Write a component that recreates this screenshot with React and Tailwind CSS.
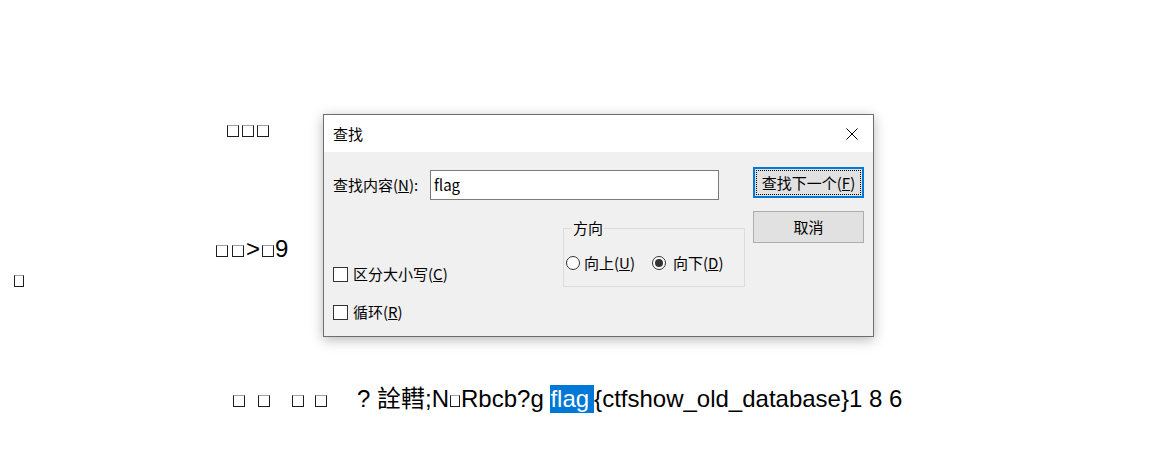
import React from "react";

const docFont = { fontFamily: '"Liberation Sans", "Noto Sans CJK SC", sans-serif' };
const uiFont = { fontFamily: '"Noto Sans CJK SC", "Noto Sans", sans-serif' };

function Radio({ checked }) {
  return (
    <span className="inline-flex shrink-0 w-[14px] h-[14px] rounded-full border border-[#333] bg-white items-center justify-center">
      {checked && <span className="w-[8px] h-[8px] rounded-full bg-[#333]" />}
    </span>
  );
}

function Check() {
  return <span className="inline-block shrink-0 w-[15px] h-[15px] border border-[#333] bg-white" />;
}

export default function App() {
  return (
    <div className="relative w-[1150px] h-[451px] bg-white overflow-hidden text-black">
      <div style={docFont} className="text-[24px] leading-[28px] whitespace-pre">
        <div className="mt-[115px] h-[28px] pl-[227px]">
          <span className="inline-block w-[12px] h-[12px] border border-[#1e1e1e] border-t-[#a0a0a0]" />
          <span className="inline-block w-[12px] h-[12px] ml-[3px] border border-[#1e1e1e] border-t-[#a0a0a0]" />
          <span className="inline-block w-[12px] h-[12px] ml-[3px] border border-[#1e1e1e] border-t-[#a0a0a0]" />
        </div>
        <div className="mt-[92px] h-[28px] pl-[216px]">
          <span className="inline-block w-[12px] h-[12px] border border-[#1e1e1e] border-t-[#a0a0a0]" />
          <span className="inline-block w-[12px] h-[12px] ml-[4px] border border-[#1e1e1e] border-t-[#a0a0a0]" />
          <span className="ml-[2px]">&gt;</span>
          <span className="inline-block w-[12px] h-[12px] ml-[2px] border border-[#1e1e1e] border-t-[#a0a0a0]" />
          <span className="ml-[1px]">9</span>
        </div>
        <div className="mt-[2px] h-[28px] pl-[14px]">
          <span className="inline-block w-[10px] h-[12px] border border-[#1e1e1e] border-t-[#a0a0a0]" />
        </div>
        <div className="mt-[92px] h-[28px] pl-[233px]">
          <span className="inline-block w-[12px] h-[12px] border border-[#1e1e1e] border-t-[#a0a0a0]" />
          <span className="inline-block w-[12px] h-[12px] ml-[13px] border border-[#1e1e1e] border-t-[#a0a0a0]" />
          <span className="inline-block w-[12px] h-[12px] ml-[22px] border border-[#1e1e1e] border-t-[#a0a0a0]" />
          <span className="inline-block w-[12px] h-[12px] ml-[11px] border border-[#1e1e1e] border-t-[#a0a0a0]" />
          <span className="ml-[30px]">? 詮轊;N</span>
          <span className="inline-block w-[10px] h-[12px] ml-[1px] mr-[1px] border border-[#1e1e1e] border-t-[#a0a0a0]" />
          <span>Rbcb?g </span>
          <span className="inline-block h-[28px] pr-[5px] bg-[#0078d7] text-white">flag</span>
          <span>{"{ctfshow_old_database}1 8 6"}</span>
        </div>
      </div>

      <div
        style={uiFont}
        className="absolute left-[323px] top-[114px] w-[551px] h-[223px] border border-[#6e6e6e] bg-[#f0f0f0] shadow-[0_3px_12px_rgba(0,0,0,0.28)] flex flex-col text-[15px] leading-[20px]"
      >
        <div className="h-[37px] bg-white flex items-center justify-between pl-[9px] pr-[15px]">
          <span>查找</span>
          <svg width="12" height="12" viewBox="0 0 12 12">
            <path d="M0.5 0.5L11.5 11.5M11.5 0.5L0.5 11.5" stroke="#000" strokeWidth="1" fill="none" />
          </svg>
        </div>
        <div className="flex-1 flex pl-[9px] pr-[9px] pt-[15px]">
          <div className="w-[412px] flex flex-col">
            <div className="flex items-center mt-[3px] h-[30px]">
              <span className="w-[97px]">
                查找内容(<span className="underline">N</span>):
              </span>
              <div className="w-[289px] h-[30px] border border-[#7a7a7a] bg-white pl-[3px] flex items-center">
                flag
              </div>
            </div>
            <div className="flex mt-[18px]">
              <div className="w-[230px] flex flex-col">
                <div className="mt-[46px] h-[20px] flex items-center gap-[5px]">
                  <Check />
                  <span>
                    区分大小写(<span className="underline">C</span>)
                  </span>
                </div>
                <div className="mt-[18px] h-[20px] flex items-center gap-[5px]">
                  <Check />
                  <span>
                    循环(<span className="underline">R</span>)
                  </span>
                </div>
              </div>
              <fieldset className="w-[182px] h-[69px] border border-[#dcdcdc] pl-[2px]">
                <legend className="ml-[6px] px-[1px]">方向</legend>
                <div className="mt-[15px] h-[20px] flex items-center">
                  <div className="w-[86px] flex items-center gap-[4px]">
                    <Radio />
                    <span>
                      向上(<span className="underline">U</span>)
                    </span>
                  </div>
                  <div className="flex items-center gap-[7px]">
                    <Radio checked />
                    <span>
                      向下(<span className="underline">D</span>)
                    </span>
                  </div>
                </div>
              </fieldset>
            </div>
          </div>
          <div className="ml-[8px] w-[111px] flex flex-col gap-[13px]">
            <div className="h-[31px] border-2 border-[#0078d7] bg-[#e1e1e1] flex items-center justify-center outline-1 outline-dotted outline-black outline-offset-[-4px]">
              查找下一个(<span className="underline">F</span>)
            </div>
            <div className="h-[32px] border border-[#adadad] bg-[#e1e1e1] flex items-center justify-center">
              取消
            </div>
          </div>
        </div>
      </div>
    </div>
  );
}
